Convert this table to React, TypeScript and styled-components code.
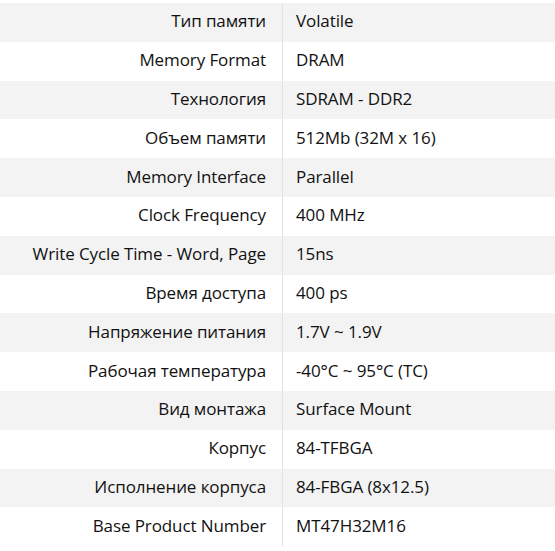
import * as React from 'react';
import styled, { createGlobalStyle } from 'styled-components';

const GlobalStyle = createGlobalStyle`
  html, body {
    margin: 0;
    padding: 0;
    background: #ffffff;
  }
`;

const specs: [string, string][] = [
  ['Тип памяти', 'Volatile'],
  ['Memory Format', 'DRAM'],
  ['Технология', 'SDRAM - DDR2'],
  ['Объем памяти', '512Mb (32M x 16)'],
  ['Memory Interface', 'Parallel'],
  ['Clock Frequency', '400 MHz'],
  ['Write Cycle Time - Word, Page', '15ns'],
  ['Время доступа', '400 ps'],
  ['Напряжение питания', '1.7V ~ 1.9V'],
  ['Рабочая температура', '-40°C ~ 95°C (TC)'],
  ['Вид монтажа', 'Surface Mount'],
  ['Корпус', '84-TFBGA'],
  ['Исполнение корпуса', '84-FBGA (8x12.5)'],
  ['Base Product Number', 'MT47H32M16'],
];

const Wrapper = styled.div`
  padding-top: 3px;
  font-family: 'Open Sans', 'Liberation Sans', sans-serif;
  font-size: 17px;
  letter-spacing: -0.1px;
  color: #111111;
`;

const Table = styled.div`
  display: grid;
  grid-template-columns: 283px 1fr;
  width: 555px;
`;

const Row = styled.div<{ $shaded: boolean }>`
  display: contents;

  & > div {
    background: ${(p) => (p.$shaded ? '#f3f3f3' : '#ffffff')};
  }
`;

const Label = styled.div`
  height: 38.8px;
  box-sizing: border-box;
  display: flex;
  align-items: center;
  justify-content: flex-end;
  padding: 0 16px 3px 0;
  border-right: 1px solid #e2e2e2;
  white-space: nowrap;
`;

const Value = styled.div`
  height: 38.8px;
  box-sizing: border-box;
  display: flex;
  align-items: center;
  padding: 0 0 3px 13px;
  white-space: nowrap;
`;

export default function App() {
  return (
    <Wrapper>
      <GlobalStyle />
      <Table>
        {specs.map(([name, value], i) => (
          <Row key={name} $shaded={i % 2 === 0}>
            <Label>{name}</Label>
            <Value>{value}</Value>
          </Row>
        ))}
      </Table>
    </Wrapper>
  );
}
